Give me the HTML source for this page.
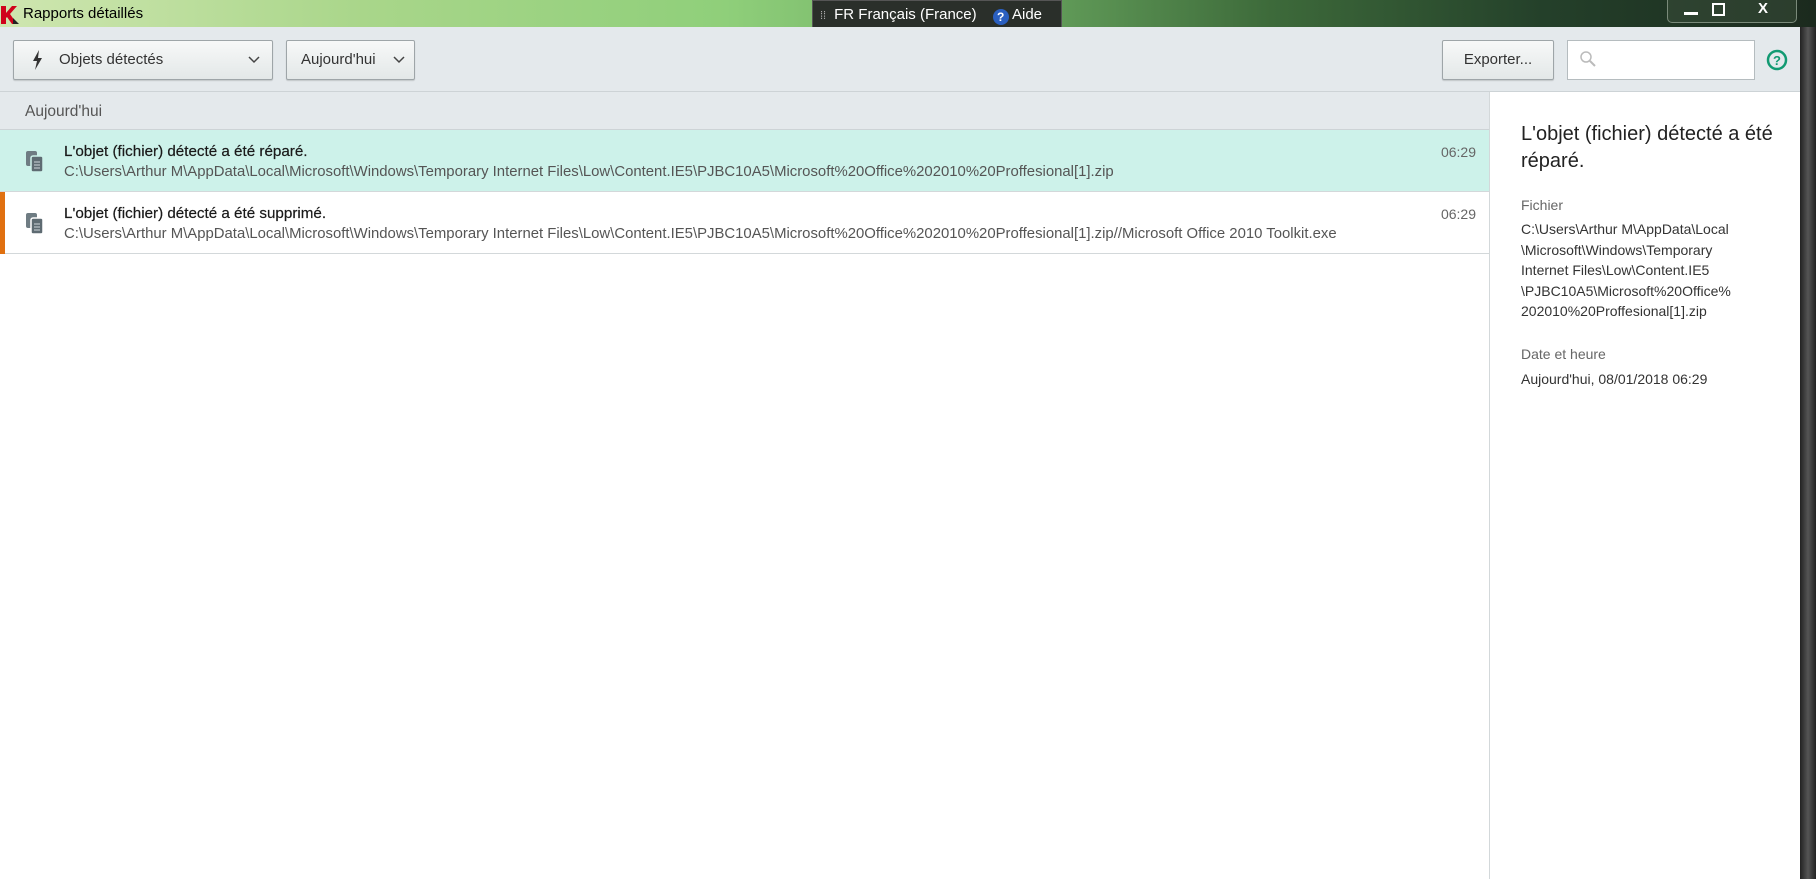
<!DOCTYPE html>
<html><head><meta charset="utf-8"><style>
*{margin:0;padding:0;box-sizing:border-box}
body{width:1816px;height:879px;overflow:hidden;font-family:"Liberation Sans",sans-serif;background:#1c2a1c;position:relative}
.abs{position:absolute}
#title{left:0;top:0;width:1816px;height:27px;background:linear-gradient(90deg,#cfe6b0 0%,#a9d68a 20%,#8fcf7a 40%,#6aa860 55%,#3d6a3a 70%,#24402a 85%,#1b2a1e 100%)}
#win{left:0;top:27px;width:1800px;height:852px;background:#fff}
#toolbar{left:0;top:27px;width:1800px;height:65px;background:#e4e9ec;border-bottom:1px solid #cdd3d6}
.btn{position:absolute;top:40px;height:40px;border:1px solid #9ea5a8;border-radius:2px;background:linear-gradient(#f7f8f8,#e3e8e8);box-shadow:0 1px 1px rgba(0,0,0,.15);font-size:15px;color:#333;line-height:38px}
#hdr{left:0;top:92px;width:1489px;height:38px;background:#e4e9ec;border-bottom:1px solid #cdd3d6;font-size:15.5px;color:#555;padding:11px 0 0 25px}
.row{position:absolute;left:0;width:1489px;height:62px;border-bottom:1px solid #d3d8da}
.t{position:absolute;left:64px;top:13px;font-size:15.2px;color:#1a1a1a;-webkit-text-stroke:0.2px #1a1a1a}
.p{position:absolute;left:64px;top:34px;font-size:14.9px;color:#555;white-space:nowrap}
.tm{position:absolute;right:13px;top:14px;font-size:14px;color:#666}
#panel{left:1489px;top:92px;width:311px;height:787px;background:#fff;border-left:1px solid #d3d8da}
</style></head><body>
<div id="title" class="abs">
 <svg class="abs" style="left:1px;top:6px" width="18" height="18"><path d="M0 0h5v7l6-7h5l-7 8 7 10h-5l-5-7-1 1v6H0z" fill="#d0021b"/><path d="M12 12l6 6h-6z" fill="#222"/></svg>
 <div class="abs" style="left:23px;top:5px;font-size:15px;color:#000">Rapports détaillés</div>
 <div class="abs" style="left:812px;top:0;width:250px;height:29px;background:#2a2f2a;border:1px solid #555;color:#fff;font-size:15px;line-height:28px"><span style="margin-left:7px;color:#aaa;font-size:11px">⁞⁞</span><span style="margin-left:8px">FR Français (France)</span><span style="display:inline-block;width:16px;height:16px;border-radius:50%;background:#2a5fc0;color:#fff;text-align:center;line-height:16px;font-size:12px;font-weight:bold;margin-left:16px;vertical-align:-2px">?</span><span> Aide</span></div>
 <div class="abs" style="left:1667px;top:0;width:130px;height:23px;border:1px solid #7a8a7a;border-top:none;border-radius:0 0 5px 5px;background:rgba(60,80,60,.5);color:#fff;font-size:15px">
  <span class="abs" style="left:16px;top:12px;width:14px;height:3px;background:#fff"></span>
  <span class="abs" style="left:44px;top:3px;width:13px;height:13px;border:2px solid #fff"></span>
  <span class="abs" style="left:90px;top:0px;font-weight:bold">X</span>
 </div>
</div>
<div class="abs" style="left:1800px;top:27px;width:16px;height:852px;background:linear-gradient(90deg,#222,#555 50%,#222)"></div>
<div id="win" class="abs"></div>
<div id="toolbar" class="abs"></div>
<div class="btn" style="left:13px;width:260px"><svg class="abs" style="left:18px;top:9px" width="12" height="20"><path d="M7 0L1 11h4l-2 9 7-12H6z" fill="#333"/></svg><span style="position:absolute;left:45px">Objets détectés</span><svg class="abs" style="left:234px;top:15px" width="12" height="8"><path d="M1 1l5 5 5-5" stroke="#444" stroke-width="1.5" fill="none"/></svg></div>
<div class="btn" style="left:286px;width:129px"><span style="position:absolute;left:14px">Aujourd'hui</span><svg class="abs" style="left:106px;top:15px" width="12" height="8"><path d="M1 1l5 5 5-5" stroke="#444" stroke-width="1.5" fill="none"/></svg></div>
<div class="btn" style="left:1442px;width:112px;text-align:center">Exporter...</div>
<div class="abs" style="left:1567px;top:40px;width:188px;height:40px;background:#fff;border:1px solid #b5bcbf"><svg class="abs" style="left:11px;top:9px" width="18" height="18"><circle cx="7" cy="7" r="5" stroke="#bbb" stroke-width="1.5" fill="none"/><path d="M11 11l5 5" stroke="#bbb" stroke-width="2"/></svg></div>
<svg class="abs" style="left:1766px;top:49px" width="22" height="22"><circle cx="11" cy="11" r="9" stroke="#129a72" stroke-width="2.5" fill="none"/><text x="11" y="16" text-anchor="middle" font-family="Liberation Sans" font-weight="bold" font-size="13" fill="#129a72">?</text></svg>
<div id="hdr" class="abs">Aujourd'hui</div>
<div class="row" style="top:130px;background:#cdf2ea">
 <svg class="abs" style="left:25px;top:20px" width="20" height="24"><rect x="1" y="1" width="11" height="15" rx="2" fill="#6f7c83"/><rect x="6" y="6" width="12" height="16" rx="2" fill="#5e6b72" stroke="#cdf2ea" stroke-width="1.5"/><path d="M9 12h6M9 15h6M9 18h6" stroke="#cfd6d9" stroke-width="1"/></svg>
 <div class="t">L'objet (fichier) détecté a été réparé.</div>
 <div class="p">C:\Users\Arthur M\AppData\Local\Microsoft\Windows\Temporary Internet Files\Low\Content.IE5\PJBC10A5\Microsoft%20Office%202010%20Proffesional[1].zip</div>
 <div class="tm">06:29</div>
</div>
<div class="row" style="top:192px;background:#fff">
 <div class="abs" style="left:0;top:0;width:5px;height:62px;background:#e07010"></div>
 <svg class="abs" style="left:25px;top:20px" width="20" height="24"><rect x="1" y="1" width="11" height="15" rx="2" fill="#6f7c83"/><rect x="6" y="6" width="12" height="16" rx="2" fill="#5e6b72" stroke="#fff" stroke-width="1.5"/><path d="M9 12h6M9 15h6M9 18h6" stroke="#cfd6d9" stroke-width="1"/></svg>
 <div class="t">L'objet (fichier) détecté a été supprimé.</div>
 <div class="p">C:\Users\Arthur M\AppData\Local\Microsoft\Windows\Temporary Internet Files\Low\Content.IE5\PJBC10A5\Microsoft%20Office%202010%20Proffesional[1].zip//Microsoft Office 2010 Toolkit.exe</div>
 <div class="tm">06:29</div>
</div>
<div id="panel" class="abs">
 <div class="abs" style="left:31px;top:29px;width:270px;font-size:20px;line-height:27px;color:#222">L'objet (fichier) détecté a été réparé.</div>
 <div class="abs" style="left:31px;top:105px;font-size:14px;color:#666">Fichier</div>
 <div class="abs" style="left:31px;top:127px;font-size:14px;line-height:20.5px;color:#333;white-space:nowrap">C:\Users\Arthur M\AppData\Local<br>\Microsoft\Windows\Temporary<br>Internet Files\Low\Content.IE5<br>\PJBC10A5\Microsoft%20Office%<br>202010%20Proffesional[1].zip</div>
 <div class="abs" style="left:31px;top:254px;font-size:14px;color:#666">Date et heure</div>
 <div class="abs" style="left:31px;top:279px;font-size:14px;color:#333">Aujourd'hui, 08/01/2018 06:29</div>
</div>
</body></html>
